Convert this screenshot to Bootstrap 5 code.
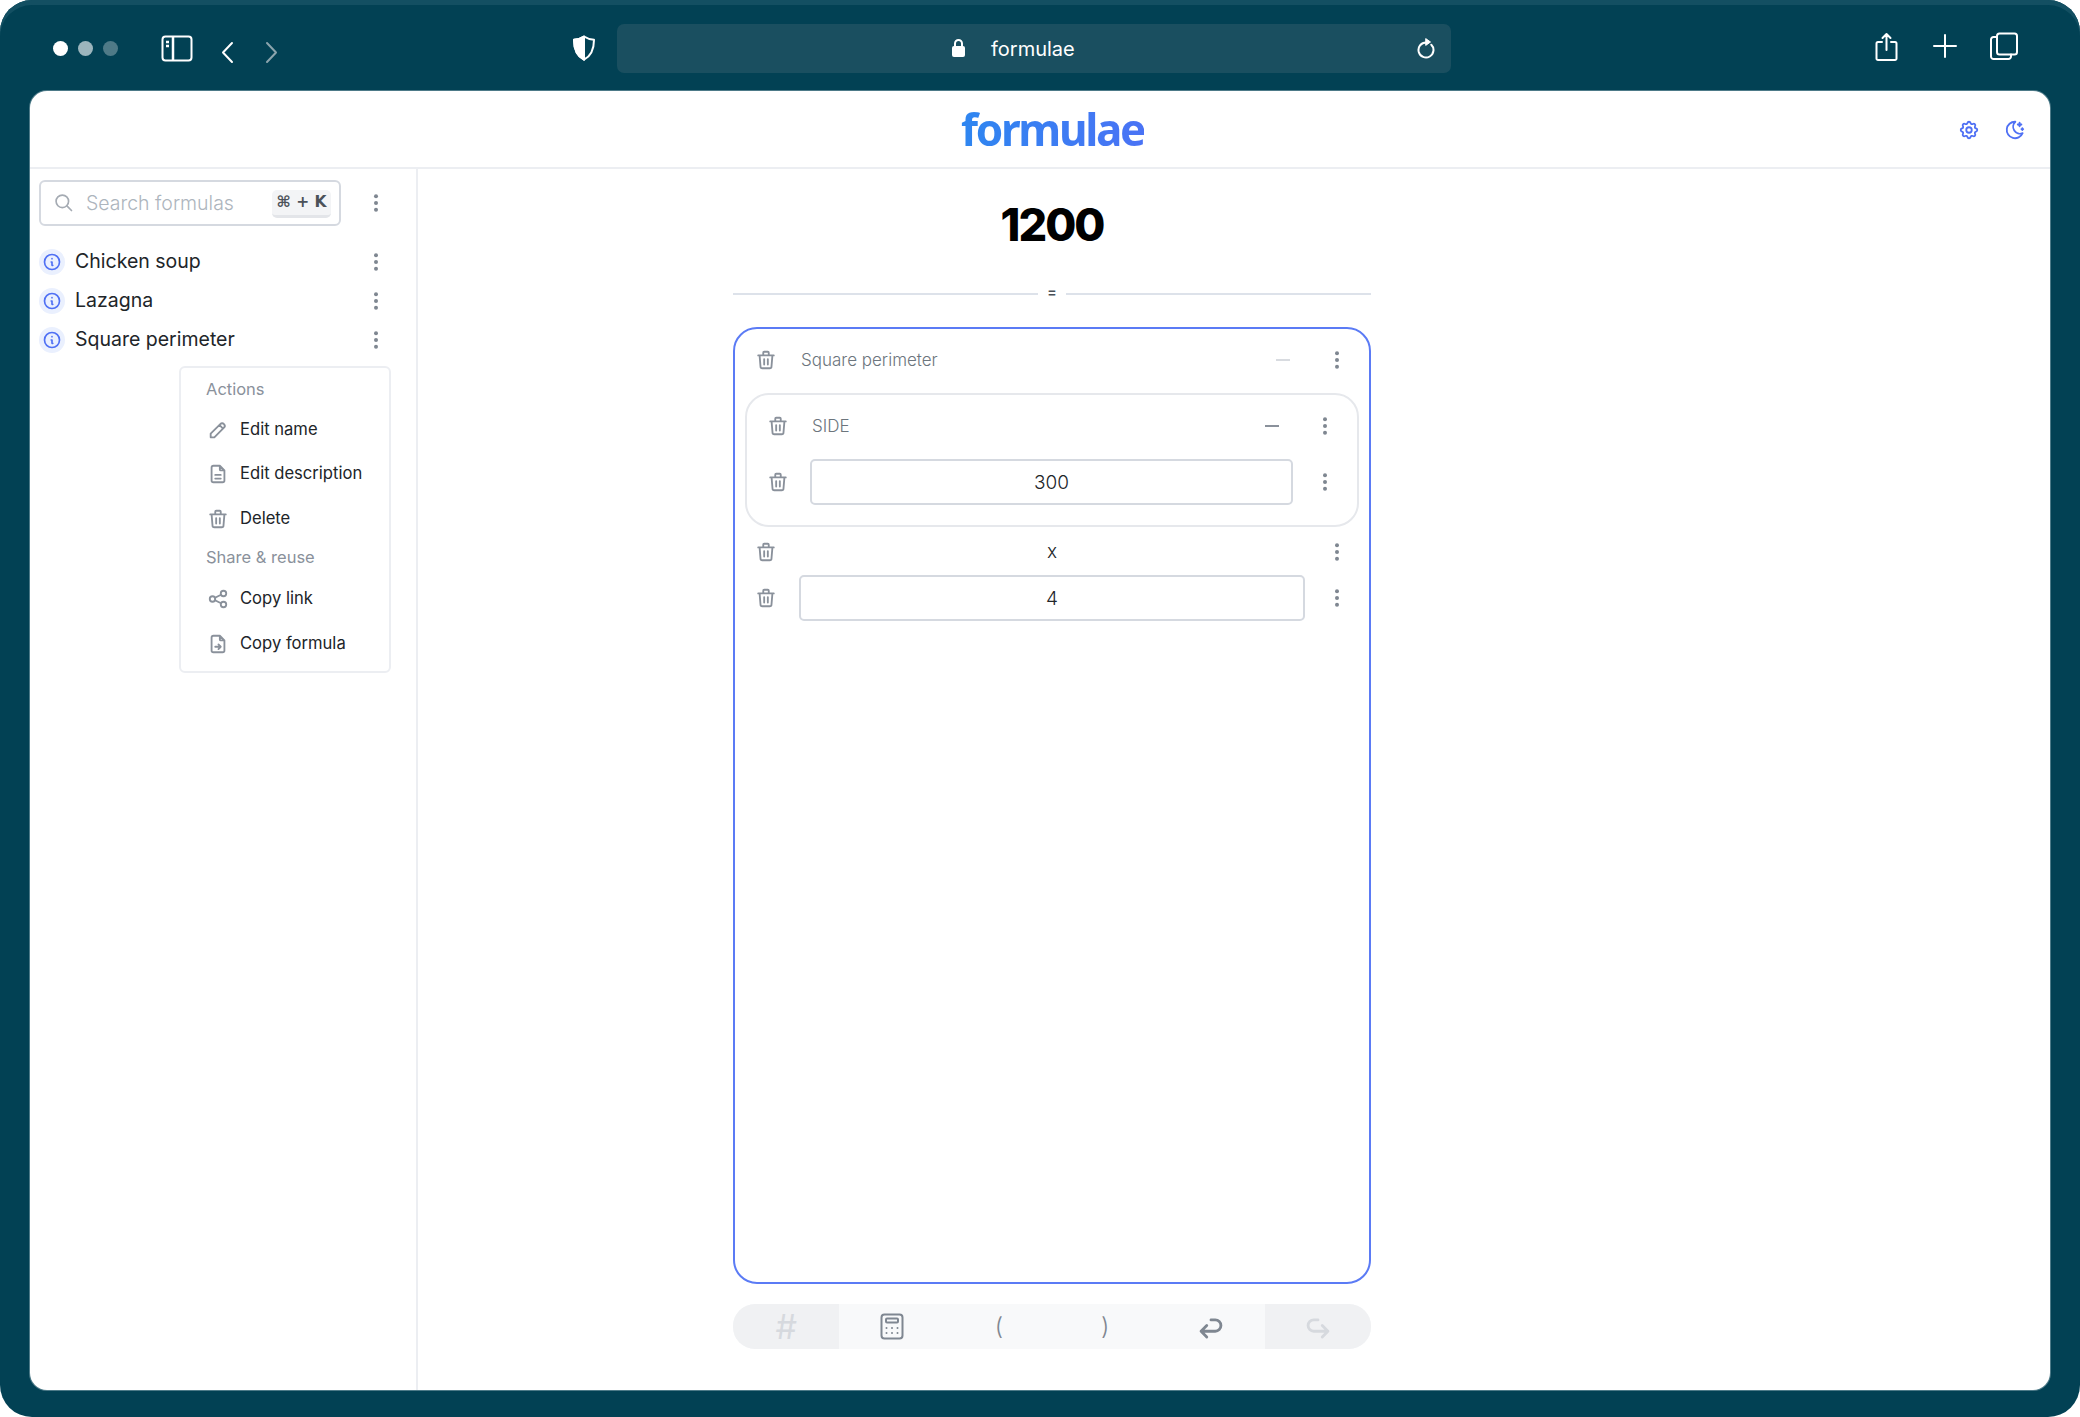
<!DOCTYPE html>
<html lang="en">
<head>
    <meta charset="UTF-8">
    <title>formulae</title>
    <link href="https://cdn.jsdelivr.net/npm/bootstrap@5.3.0/dist/css/bootstrap.min.css" rel="stylesheet">
    <style>
        body {
            margin: 0;
            background: #fff;
            font-family: "Inter", "Noto Sans", sans-serif;
            color: #212529;
            overflow: hidden;
        }
        .ico { fill: none; stroke: currentColor; stroke-width: 2; stroke-linecap: round; stroke-linejoin: round; flex: none; }
        .ico-dots { fill: #7f8791; stroke: none; flex: none; }
        .ico-muted { color: #8a919b; }

        /* browser chrome */
        .window-frame {
            width: 2080px;
            height: 1417px;
            background: #024154;
            border-radius: 32px;
            box-shadow: inset 0 5px 0 #134f62;
            color: #fff;
        }
        .chrome-bar { height: 91px; padding: 5px 0 0 53px; flex: none; }
        .traffic-dot { width: 15px; height: 15px; border-radius: 50%; background: #fff; margin-right: 10px; }
        .traffic-dot.dim1 { background: #9cb5bd; }
        .traffic-dot.dim2 { background: #4f7a87; margin-right: 0; }
        .tool-sidebar { margin-left: 43px; }
        .tool-back { margin: 9px 0 0 27px; }
        .tool-forward { margin: 9px 0 0 31px; color: #8ba4ad; }
        .tool-shield { margin-left: 293px; }
        .tool-share { margin: -4px 0 0 424px; }
        .tool-plus { margin: -5px 0 0 35px; }
        .tool-tabs { margin: -5px 0 0 33px; }
        .url-bar {
            width: 834px;
            height: 49px;
            margin-left: 21px;
            padding: 0 15px 0 335px;
            background: #1a4f60;
            border-radius: 7px;
            font-size: 20px;
        }
        .url-text { margin-left: 26px; margin-right: auto; padding-top: 2px; }

        /* app card */
        .app-card {
            height: 1299px;
            margin: 0 30px;
            background: #fff;
            border-radius: 17px;
            box-shadow: 0 0 0 1px #4d7a88;
            color: #212529;
            overflow: hidden;
        }
        .app-header { height: 78px; border-bottom: 2px solid #eceef2; flex: none; }
        .brand-logo {
            position: absolute;
            left: 931px;
            top: 0;
            font-family: "Noto Sans", sans-serif;
            font-weight: 700;
            font-size: 44px;
            line-height: 76px;
            letter-spacing: -2.3px;
            background: linear-gradient(90deg, #2e86f0, #4a73f5);
            -webkit-background-clip: text;
            background-clip: text;
            color: transparent;
        }
        .header-tools { color: #4f70f4; gap: 24px; padding-right: 24px; padding-top: 2px; }

        /* sidebar */
        .app-side { width: 388px; flex: none; border-right: 2px solid #eceef2; padding: 11px 0 0 9px; position: relative; }
        .search-box {
            width: 302px;
            height: 46px;
            border: 2px solid #d5d9e0;
            border-radius: 6px;
            padding: 0 8px 0 13px;
        }
        .search-box .form-control {
            border: 0;
            padding: 2px 0 0 12px;
            font-size: 19.5px;
            font-weight: 300;
            box-shadow: none;
        }
        .search-box .form-control::placeholder { color: #adb5bd; opacity: 1; }
        .key-hint {
            width: 59px;
            height: 28px;
            margin-top: 1px;
            background: #f3f4f6;
            border-radius: 5px;
            border-bottom: 3px solid #e3e5e9;
            font-size: 15.5px;
            font-weight: 700;
            color: #4b5159;
            line-height: 25px;
            text-align: center;
            flex: none;
            font-family: "DejaVu Sans", sans-serif;
        }
        .side-dots { margin-left: 25px; }
        .formula-list { margin-top: 16px; width: 347px; --bs-list-group-bg: transparent; --bs-list-group-border-width: 0; }
        .formula-row {
            height: 39px;
            padding: 0;
            font-size: 19.5px;
            display: flex;
            align-items: center;
        }
        .info-badge {
            width: 26px;
            height: 26px;
            border-radius: 50%;
            background: #eaf0fe;
            color: #4f70f4;
            margin-right: 10px;
            flex: none;
        }
        .formula-row .ico-dots { margin-left: auto; }
        .side-menu.dropdown-menu {
            display: block;
            left: 149px;
            top: 197px;
            width: 212px;
            height: 307px;
            padding: 9px 0 0;
            border: 2px solid #eceef2;
            border-radius: 6px;
            font-size: 16.6px;
            --bs-dropdown-min-width: 0;
        }
        .side-menu .dropdown-header { padding: 0 0 0 25px; font-size: 16.5px; font-weight: 400; color: #8a919b; line-height: 24px; }
        .side-menu .dropdown-item { display: flex; align-items: center; gap: 11px; height: 45px; padding: 0 0 0 26px; color: #212529; }
        .side-menu .dropdown-header.second { margin-top: 4px; margin-bottom: 7px; }
        .side-menu .first-item { margin-top: 6px; margin-bottom: -1px; }

        /* main */
        .app-main { padding-left: 315px; }
        .main-col { width: 638px; }
        .result-value { font-size: 45px; font-weight: 800; color: #000; line-height: 54px; margin-top: 29px; letter-spacing: -2px; }
        .equals-rule { margin-top: 40px; height: 4px; gap: 9px; color: #495057; font-size: 14px; font-weight: 600; line-height: 0; }
        .equals-rule span { flex: 1; height: 2px; background: #dde2ea; }
        .equals-rule b { font-weight: 600; padding-bottom: 4px; }
        .formula-box {
            height: 957px;
            margin-top: 31px;
            border: 2px solid #5b7bf5;
            border-radius: 24px;
            padding: 8px 10px;
        }
        .term-row { display: flex; align-items: center; height: 46px; }
        .term-row .t-trash { width: 54px; flex: none; padding-left: 10px; display: flex; }
        .term-row .t-body { flex: 1; min-width: 0; }
        .term-row .t-dots { width: 54px; flex: none; padding-left: 22px; display: flex; }
        .group-box .term-row .t-trash { width: 63px; padding-left: 20px; }
        .group-box .term-row .t-dots { width: 64px; padding-left: 22px; }
        .term-label { font-size: 17px; font-weight: 300; color: #6c757d; padding: 2px 0 0 2px; }
        .term-dash { display: block; width: 14px; height: 2px; margin-left: auto; margin-right: 15px; background: #d8dbe0; }
        .term-dash.dark { background: #8a919b; margin-right: 14px; }
        .term-input.form-control {
            height: 46px;
            text-align: center;
            font-size: 19px;
            font-weight: 300;
            color: #212529;
            border: 2px solid #d5d9e0;
            border-radius: 5px;
        }
        .group-box { border: 2px solid #e6e8ec; border-radius: 24px; margin: 10px 0 2px; height: 134px; padding: 8px 0 0; }
        .term-stack { margin-top: 10px; }
        .term-op { text-align: center; font-size: 19px; font-weight: 300; color: #212529; }
        .key-bar { margin-top: 20px; height: 45px; border-radius: 22px; overflow: hidden; background: #f8f9fa; }
        .key-bar .btn {
            flex: 1;
            border: 0;
            border-radius: 0;
            padding: 0;
            background: #f8f9fa;
            color: #7f8791;
            font-size: 24px;
            font-weight: 300;
            display: flex;
            align-items: center;
            justify-content: center;
        }
        .key-bar .btn.off { background: #f0f1f3; color: #d6d9de; }
        .key-bar .hash-key { font-size: 34px; font-weight: 400; }
    </style>
</head>
<body>
    <svg width="0" height="0" class="position-absolute">
        <symbol id="i-trash" viewBox="0 0 24 24"><path d="M3.500 7h17M10 11v6M14 11v6M5 7l1 12a2 2 0 0 0 2 2h8a2 2 0 0 0 2-2l1-12M9 7V4a1 1 0 0 1 1-1h4a1 1 0 0 1 1 1v3"/></symbol>
        <symbol id="i-dots" viewBox="0 0 24 24"><circle cx="12" cy="4" r="2.400"/><circle cx="12" cy="12" r="2.400"/><circle cx="12" cy="20" r="2.400"/></symbol>
        <symbol id="i-info" viewBox="0 0 24 24"><circle cx="12" cy="12" r="9"/><path d="M12 8h.01M11 12h1v4h1"/></symbol>
        <symbol id="i-pencil" viewBox="0 0 24 24"><path d="M4 20h4L18.500 9.500a2.800 2.800 0 0 0-4-4L4 16v4M13.500 6.500l4 4"/></symbol>
        <symbol id="i-doc" viewBox="0 0 24 24"><path d="M14 3v4a1 1 0 0 0 1 1h4M17 21H7a2 2 0 0 1-2-2V5a2 2 0 0 1 2-2h7l5 5v11a2 2 0 0 1-2 2zM9 13h6M9 17h6"/></symbol>
        <symbol id="i-share" viewBox="0 0 24 24"><circle cx="6" cy="12" r="3"/><circle cx="18" cy="6" r="3"/><circle cx="18" cy="18" r="3"/><path d="M8.700 10.700l6.600-3.400M8.700 13.300l6.600 3.400"/></symbol>
        <symbol id="i-docin" viewBox="0 0 24 24"><path d="M14 3v4a1 1 0 0 0 1 1h4M17 21H7a2 2 0 0 1-2-2V5a2 2 0 0 1 2-2h7l5 5v11a2 2 0 0 1-2 2zM9 15h6M12.500 12.500L15 15l-2.500 2.500"/></symbol>
    </svg>

    <div class="window-frame d-flex flex-column">
        <div class="chrome-bar d-flex align-items-center">
            <i class="traffic-dot"></i><i class="traffic-dot dim1"></i><i class="traffic-dot dim2"></i>
            <svg class="ico tool-sidebar" width="32" height="27" viewBox="0 0 32 27"><rect x="1.500" y="1.500" width="29" height="24" rx="3"/><path d="M12 1.500v24M5 7h3M5 11h3" stroke-width="2.500" stroke-linecap="butt"/></svg>
            <svg class="ico tool-back" width="14" height="23" viewBox="0 0 14 23" stroke-width="3"><path d="M12 2L3 11.500 12 21"/></svg>
            <svg class="ico tool-forward" width="14" height="23" viewBox="0 0 14 23" stroke-width="3"><path d="M2 2l9 9.500L2 21"/></svg>
            <svg class="ico tool-shield" width="24" height="26" viewBox="0 0 24 26" stroke-width="2.200"><path d="M12 1.500c3 2 6 3 10 3.200 0 9-2.500 16-10 20-7.500-4-10-11-10-20 4-.2 7-1.200 10-3.200z"/><path d="M12 1.500c-3 2-6 3-10 3.200 0 9 2.500 16 10 20z" fill="currentColor"/></svg>
            <div class="url-bar d-flex align-items-center">
                <svg width="13" height="18" viewBox="0 0 13 18" fill="#fff"><rect y="7" width="13" height="11" rx="2"/><path d="M3 8V4.500a3.500 3.500 0 0 1 7 0V8" fill="none" stroke="#fff" stroke-width="2"/></svg>
                <span class="url-text">formulae</span>
                <svg class="ico" width="20" height="21" viewBox="0 0 20 21"><path d="M10 4.500A7.500 7.500 0 1 0 15.300 6.700"/><path d="M10 .8L14.500 4 10 7.200z" fill="#fff" stroke-width="1"/></svg>
            </div>
            <svg class="ico tool-share" width="23" height="29" viewBox="0 0 23 29"><path d="M7 10H3a1.500 1.500 0 0 0-1.500 1.500v15A1.500 1.500 0 0 0 3 28h17a1.500 1.500 0 0 0 1.500-1.500v-15A1.500 1.500 0 0 0 20 10h-4M11.500 18V2M7.500 6l4-4 4 4"/></svg>
            <svg class="ico tool-plus" width="24" height="24" viewBox="0 0 24 24" stroke-width="2.200"><path d="M12 1v22M1 12h22"/></svg>
            <svg class="ico tool-tabs" width="28" height="28" viewBox="0 0 28 28"><rect x="7" y="1.500" width="20" height="21" rx="2.500"/><path d="M7 5H3.500A2.500 2.500 0 0 0 1 7.500v17A2.500 2.500 0 0 0 3.500 27h15a2.500 2.500 0 0 0 2.500-2.500V22.500"/></svg>
        </div>

        <div class="app-card d-flex flex-column">
            <header class="app-header d-flex align-items-center justify-content-end position-relative">
                <span class="brand-logo">formulae</span>
                <div class="header-tools d-flex align-items-center">
                    <svg class="ico" width="22" height="22" viewBox="0 0 24 24"><path d="M10.325 4.317c.426-1.756 2.924-1.756 3.350 0a1.724 1.724 0 0 0 2.573 1.066c1.543-.940 3.310.826 2.370 2.370a1.724 1.724 0 0 0 1.065 2.572c1.756.426 1.756 2.924 0 3.350a1.724 1.724 0 0 0-1.066 2.573c.940 1.543-.826 3.310-2.370 2.370a1.724 1.724 0 0 0-2.572 1.065c-.426 1.756-2.924 1.756-3.350 0a1.724 1.724 0 0 0-2.573-1.066c-1.543.940-3.310-.826-2.370-2.370a1.724 1.724 0 0 0-1.065-2.572c-1.756-.426-1.756-2.924 0-3.350a1.724 1.724 0 0 0 1.066-2.573c-.940-1.543.826-3.310 2.370-2.370 1 .608 2.296.070 2.572-1.065z"/><circle cx="12" cy="12" r="3"/></svg>
                    <svg class="ico" width="22" height="22" viewBox="0 0 24 24"><path d="M12 3h.393a7.500 7.500 0 0 0 7.920 12.446A9 9 0 1 1 12 3zM17 4a2 2 0 0 0 2 2 2 2 0 0 0-2 2 2 2 0 0 0-2-2 2 2 0 0 0 2-2M19 11h2m-1-1v2"/></svg>
                </div>
            </header>

            <div class="d-flex flex-grow-1">
                <aside class="app-side">
                    <div class="d-flex align-items-center">
                        <div class="search-box d-flex align-items-center">
                            <svg class="ico" style="color:#a5abb3" width="20" height="20" viewBox="0 0 24 24"><circle cx="10" cy="10" r="7.500"/><path d="M21 21l-5.500-5.500"/></svg>
                            <input class="form-control" type="text" placeholder="Search formulas">
                            <span class="key-hint">⌘ + K</span>
                        </div>
                        <svg class="ico-dots side-dots" width="20" height="20"><use href="#i-dots"/></svg>
                    </div>
                    <div class="formula-list list-group list-group-flush">
                        <div class="list-group-item formula-row"><span class="info-badge d-flex align-items-center justify-content-center"><svg class="ico" width="20" height="20"><use href="#i-info"/></svg></span>Chicken soup<svg class="ico-dots" width="20" height="20"><use href="#i-dots"/></svg></div>
                        <div class="list-group-item formula-row"><span class="info-badge d-flex align-items-center justify-content-center"><svg class="ico" width="20" height="20"><use href="#i-info"/></svg></span>Lazagna<svg class="ico-dots" width="20" height="20"><use href="#i-dots"/></svg></div>
                        <div class="list-group-item formula-row"><span class="info-badge d-flex align-items-center justify-content-center"><svg class="ico" width="20" height="20"><use href="#i-info"/></svg></span>Square perimeter<svg class="ico-dots" width="20" height="20"><use href="#i-dots"/></svg></div>
                    </div>
                    <div class="side-menu dropdown-menu show">
                        <h6 class="dropdown-header">Actions</h6>
                        <a class="dropdown-item first-item" href="#"><svg class="ico ico-muted" width="22" height="22"><use href="#i-pencil"/></svg>Edit name</a>
                        <a class="dropdown-item" href="#"><svg class="ico ico-muted" width="22" height="22"><use href="#i-doc"/></svg>Edit description</a>
                        <a class="dropdown-item" href="#"><svg class="ico ico-muted" width="22" height="22"><use href="#i-trash"/></svg>Delete</a>
                        <h6 class="dropdown-header second">Share &amp; reuse</h6>
                        <a class="dropdown-item" href="#"><svg class="ico ico-muted" width="22" height="22"><use href="#i-share"/></svg>Copy link</a>
                        <a class="dropdown-item" href="#"><svg class="ico ico-muted" width="22" height="22"><use href="#i-docin"/></svg>Copy formula</a>
                    </div>
                </aside>

                <main class="app-main">
                    <div class="main-col">
                        <div class="result-value text-center">1200</div>
                        <div class="equals-rule d-flex align-items-center"><span></span><b>=</b><span></span></div>
                        <div class="formula-box">
                            <div class="term-row">
                                <div class="t-trash"><svg class="ico ico-muted" width="22" height="22"><use href="#i-trash"/></svg></div>
                                <div class="t-body d-flex align-items-center"><div class="term-label">Square perimeter</div><i class="term-dash"></i></div>
                                <div class="t-dots"><svg class="ico-dots" width="20" height="20"><use href="#i-dots"/></svg></div>
                            </div>
                            <div class="group-box">
                                <div class="term-row">
                                    <div class="t-trash"><svg class="ico ico-muted" width="22" height="22"><use href="#i-trash"/></svg></div>
                                    <div class="t-body d-flex align-items-center"><div class="term-label">SIDE</div><i class="term-dash dark"></i></div>
                                    <div class="t-dots"><svg class="ico-dots" width="20" height="20"><use href="#i-dots"/></svg></div>
                                </div>
                                <div class="term-row term-stack">
                                    <div class="t-trash"><svg class="ico ico-muted" width="22" height="22"><use href="#i-trash"/></svg></div>
                                    <div class="t-body"><input class="form-control term-input" type="text" value="300"></div>
                                    <div class="t-dots"><svg class="ico-dots" width="20" height="20"><use href="#i-dots"/></svg></div>
                                </div>
                            </div>
                            <div class="term-row">
                                <div class="t-trash"><svg class="ico ico-muted" width="22" height="22"><use href="#i-trash"/></svg></div>
                                <div class="t-body term-op">x</div>
                                <div class="t-dots"><svg class="ico-dots" width="20" height="20"><use href="#i-dots"/></svg></div>
                            </div>
                            <div class="term-row">
                                <div class="t-trash"><svg class="ico ico-muted" width="22" height="22"><use href="#i-trash"/></svg></div>
                                <div class="t-body"><input class="form-control term-input" type="text" value="4"></div>
                                <div class="t-dots"><svg class="ico-dots" width="20" height="20"><use href="#i-dots"/></svg></div>
                            </div>
                        </div>
                        <div class="key-bar d-flex">
                            <button class="btn off hash-key" type="button">#</button>
                            <button class="btn" type="button"><svg class="ico" width="24" height="27" viewBox="0 0 24 27" stroke-width="2.500"><rect x="1.500" y="1.500" width="21" height="24" rx="3"/><rect x="6" y="5.500" width="12" height="4" rx="1"/><path d="M6.500 15h.01M12 15h.01M17.500 15h.01M6.500 20h.01M12 20h.01M17.500 20h.01"/></svg></button>
                            <button class="btn" type="button">(</button>
                            <button class="btn" type="button">)</button>
                            <button class="btn" type="button"><svg class="ico" width="34" height="34" viewBox="0 0 24 24"><path d="M9 11l-4 4 4 4M5 15h10a4 4 0 0 0 0-8h-3"/></svg></button>
                            <button class="btn off" type="button"><svg class="ico" width="34" height="34" viewBox="0 0 24 24"><path d="M15 11l4 4-4 4M19 15H9a4 4 0 0 1 0-8h3"/></svg></button>
                        </div>
                    </div>
                </main>
            </div>
        </div>
    </div>
    <script src="https://cdn.jsdelivr.net/npm/bootstrap@5.3.0/dist/js/bootstrap.bundle.min.js"></script>
</body>
</html>
